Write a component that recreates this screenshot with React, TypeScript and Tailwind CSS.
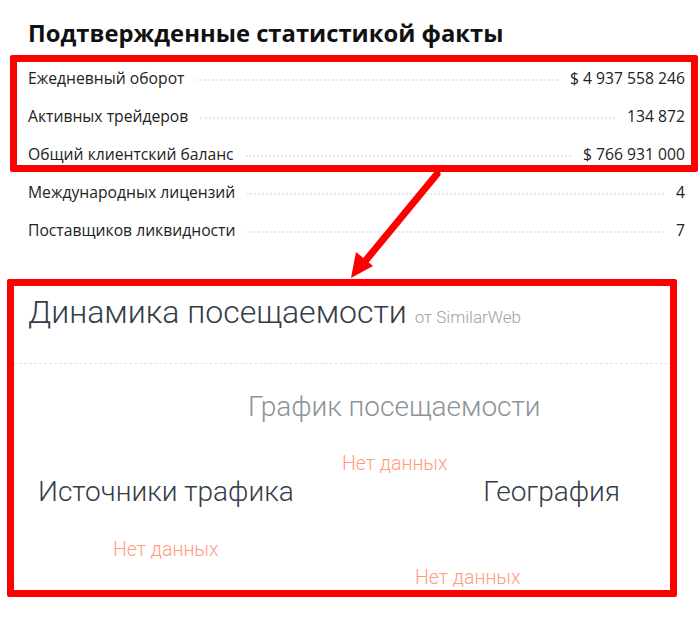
import React from "react";

const rows = [
  ["Ежедневный оборот", "$ 4 937 558 246"],
  ["Активных трейдеров", "134 872"],
  ["Общий клиентский баланс", "$ 766 931 000"],
  ["Международных лицензий", "4"],
  ["Поставщиков ликвидности", "7"],
];

export default function App() {
  return (
    <div className="relative w-[700px] h-[618px] bg-white overflow-hidden">
      <div className="pt-[19px]">
        <h1
          className="pl-[28px] text-[23.8px] leading-[28px] font-bold text-[#111]"
          style={{ fontFamily: '"Open Sans", "Noto Sans", sans-serif' }}
        >
          Подтвержденные статистикой факты
        </h1>
        <div className="mt-[13px] pl-[28px] pr-[15px]" style={{ fontFamily: '"Open Sans", "Noto Sans", sans-serif' }}>
          {rows.map(([label, value]) => (
            <div key={label} className="flex h-[38px] items-center text-[15.7px] text-[#222]">
              <span className="whitespace-nowrap">{label}</span>
              <span className="mx-[12px] mt-[2px] flex-1 border-t-2 border-dotted border-[#e3e9ee]" />
              <span className="whitespace-nowrap">{value}</span>
            </div>
          ))}
        </div>

        <div style={{ fontFamily: 'Roboto, "Noto Sans", sans-serif' }}>
          <div className="mt-[42px] flex items-baseline pl-[28px]">
            <span className="text-[32px] leading-[40px] font-light text-[#333d48]">Динамика посещаемости</span>
            <span className="ml-[8px] text-[17px] font-light text-[#9aa1a6]">от SimilarWeb</span>
          </div>
          <div className="mt-[31px] ml-[14px] w-[664px] border-t border-dashed border-[#dde5ea]" />
          <div className="mt-[26px] pl-[248px] text-[28px] leading-[34px] font-light text-[#8c9398] whitespace-nowrap">
            График посещаемости
          </div>
          <div className="mt-[28px] pl-[342px] text-[19.5px] leading-[24px] font-light text-[#ff9c80]">Нет данных</div>
          <div className="mt-[-1px] flex text-[28px] leading-[34px] font-light text-[#333d48]">
            <span className="pl-[38px] whitespace-nowrap">Источники трафика</span>
            <span className="ml-auto mr-[80px] whitespace-nowrap">География</span>
          </div>
          <div className="mt-[29px] pl-[113px] text-[19.5px] leading-[24px] font-light text-[#ff9c80]">Нет данных</div>
          <div className="mt-[4px] pl-[415px] text-[19.5px] leading-[24px] font-light text-[#ff9c80]">Нет данных</div>
        </div>
      </div>

      {/* annotation overlays */}
      <div className="absolute left-[10px] top-[55px] w-[688px] h-[117px] border-[7px] border-[#ff0000] rounded-[2px]" />
      <div className="absolute left-[7px] top-[279px] w-[670px] h-[318px] border-[7px] border-[#ff0000] rounded-[2px]" />
      <svg className="absolute left-0 top-0" width="700" height="618" viewBox="0 0 700 618">
        <line x1="437" y1="174" x2="362" y2="265" stroke="#ff0000" strokeWidth="7" strokeLinecap="round" />
        <polygon points="351,278 356,252 373,266" fill="#ff0000" />
      </svg>
    </div>
  );
}
